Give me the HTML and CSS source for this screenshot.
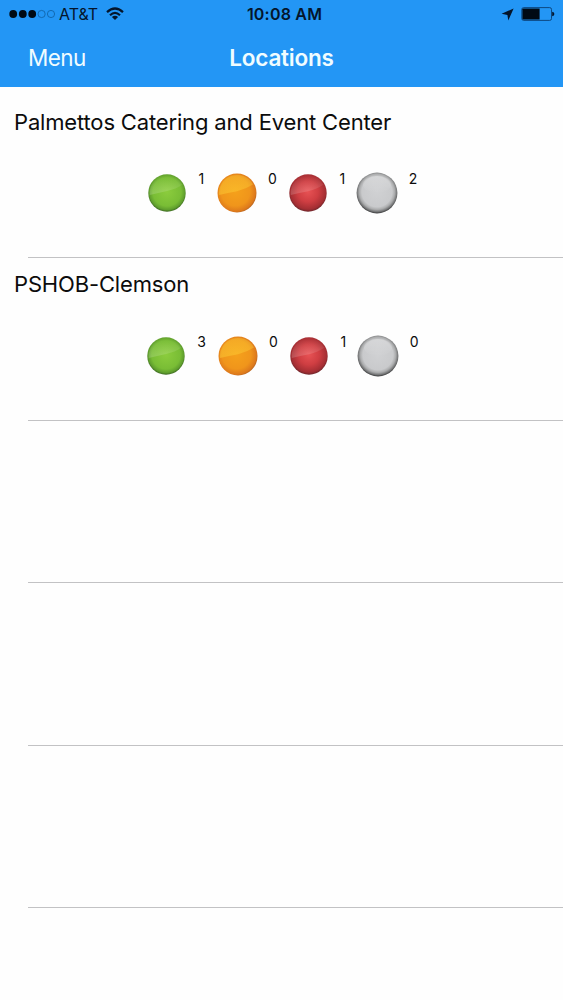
FILE: index.html
```
<!DOCTYPE html>
<html lang="en">
<head>
    <meta charset="UTF-8">
    <title>Locations</title>
    <link rel="stylesheet" href="styles.css">
</head>
<body>
<!-- Shared ball artwork -->
<svg class="defs" width="0" height="0">
    <defs>
        <radialGradient id="green" cx="50%" cy="47%" r="54%">
            <stop offset="0" stop-color="#8bcc3d"/>
            <stop offset="0.7" stop-color="#79bd35"/>
            <stop offset="0.88" stop-color="#609f2d"/>
            <stop offset="1" stop-color="#365f20"/>
        </radialGradient>
        <radialGradient id="orange" cx="46%" cy="46%" r="57%">
            <stop offset="0" stop-color="#f5a11b"/>
            <stop offset="0.65" stop-color="#f0951b"/>
            <stop offset="0.9" stop-color="#dd791c"/>
            <stop offset="1" stop-color="#a95e22"/>
        </radialGradient>
        <radialGradient id="red" cx="50%" cy="46%" r="55%">
            <stop offset="0" stop-color="#e75254"/>
            <stop offset="0.5" stop-color="#cf3e42"/>
            <stop offset="0.86" stop-color="#a42e33"/>
            <stop offset="1" stop-color="#66252a"/>
        </radialGradient>
        <radialGradient id="gray" cx="50%" cy="47%" r="53%">
            <stop offset="0" stop-color="#d0d1d3"/>
            <stop offset="0.7" stop-color="#c9cacc"/>
            <stop offset="0.82" stop-color="#abacad"/>
            <stop offset="0.92" stop-color="#767778"/>
            <stop offset="1" stop-color="#353637"/>
        </radialGradient>
        <linearGradient id="gloss" x1="0" y1="0" x2="0" y2="1">
            <stop offset="0" stop-color="#fff" stop-opacity="0"/>
            <stop offset="1" stop-color="#fff" stop-opacity="0.17"/>
        </linearGradient>
        <linearGradient id="gloss-yellow" x1="0" y1="0" x2="0" y2="1">
            <stop offset="0" stop-color="#ffd83c" stop-opacity="0.3"/>
            <stop offset="1" stop-color="#ffd83c" stop-opacity="0.4"/>
        </linearGradient>
        <linearGradient id="shine" x1="0" y1="0" x2="0" y2="1">
            <stop offset="0" stop-color="#fff" stop-opacity="0.25"/>
            <stop offset="1" stop-color="#fff" stop-opacity="0"/>
        </linearGradient>
        <symbol id="ball-green" viewBox="0 0 42 42">
            <circle cx="21" cy="21" r="18.7" fill="url(#green)"/>
            <path d="M3.8 22.9 A17.3 17.3 0 0 1 36.2 12.8 Q30 17 21 19.1 Q12 21 3.8 22.9Z" fill="url(#gloss)"/>
        </symbol>
        <symbol id="ball-orange" viewBox="0 0 42 42">
            <circle cx="21" cy="21" r="19.5" fill="url(#orange)"/>
            <path d="M3 23.1 A18.1 18.1 0 0 1 37 12.6 Q30 17 21 19.3 Q12 21.1 3 23.1Z" fill="url(#gloss-yellow)"/>
        </symbol>
        <symbol id="ball-red" viewBox="0 0 42 42">
            <circle cx="21" cy="21" r="18.7" fill="url(#red)"/>
            <path d="M3.8 22.9 A17.3 17.3 0 0 1 36.2 12.8 Q30 17 21 19.3 Q12 21.2 3.8 22.9Z" fill="url(#gloss)"/>
        </symbol>
        <symbol id="ball-gray" viewBox="0 0 42 42">
            <circle cx="21" cy="21" r="20.4" fill="url(#gray)"/>
            <ellipse cx="21" cy="12.5" rx="14" ry="8.5" fill="url(#shine)"/>
        </symbol>
    </defs>
</svg>

<!-- Header -->
<div class="header">
    <div class="status-bar">
        <div class="carrier">
            <svg class="signal" width="48" height="10" viewBox="0 0 48 10">
                <circle cx="4.2" cy="5" r="3.9"/>
                <circle cx="13.8" cy="5" r="3.9"/>
                <circle cx="23.2" cy="5" r="3.9"/>
                <circle class="empty" cx="32.6" cy="5" r="3.6"/>
                <circle class="empty" cx="42" cy="5" r="3.6"/>
            </svg>
            <span class="carrier-name">AT&amp;T</span>
            <svg class="wifi" width="18" height="14" viewBox="0 0 18 14">
                <path d="M1 5.1 Q9 -2.1 17 5.1" fill="none" stroke="#04152b" stroke-width="2.2"/>
                <path d="M4 8.2 Q9 3.7 14 8.2" fill="none" stroke="#04152b" stroke-width="2.2"/>
                <path d="M5.9 10 Q9 7.4 12.1 10 L9 13.1Z" fill="#04152b"/>
            </svg>
        </div>
        <div class="clock">10:08 AM</div>
        <div class="indicators">
            <svg width="13" height="13" viewBox="0 0 13 13">
                <path d="M12.6 0.5 L0.6 5.8 L6.4 6.9 L7.3 12.4Z" fill="#04152b"/>
            </svg>
            <svg class="battery" width="34" height="14" viewBox="0 0 34 14">
                <rect x="0.8" y="0.6" width="29.7" height="12.8" rx="1.8" fill="none" stroke="#0a3f74" stroke-width="0.9"/>
                <path d="M2.2 1.5 H18.6 V12.5 H2.2 Q1.4 12.5 1.4 11.7 V2.3 Q1.4 1.5 2.2 1.5Z" fill="#000a14"/>
                <path d="M31.2 4.8 Q33.4 5 33.4 7 Q33.4 9 31.2 9.2Z" fill="#04152b"/>
            </svg>
        </div>
    </div>
    <div class="nav-bar">
        <a class="menu">Menu</a>
        <h1 class="title">Locations</h1>
    </div>
</div>

<!-- Location list -->
<ul class="locations">
    <li class="location">
        <h2>Palmettos Catering and Event Center</h2>
        <div class="counts">
            <div class="count green"><svg><use href="#ball-green"/></svg><span>1</span></div>
            <div class="count orange"><svg><use href="#ball-orange"/></svg><span>0</span></div>
            <div class="count red"><svg><use href="#ball-red"/></svg><span>1</span></div>
            <div class="count gray"><svg><use href="#ball-gray"/></svg><span>2</span></div>
        </div>
    </li>
    <li class="location">
        <h2>PSHOB-Clemson</h2>
        <div class="counts wide">
            <div class="count green"><svg><use href="#ball-green"/></svg><span>3</span></div>
            <div class="count orange"><svg><use href="#ball-orange"/></svg><span>0</span></div>
            <div class="count red"><svg><use href="#ball-red"/></svg><span>1</span></div>
            <div class="count gray"><svg><use href="#ball-gray"/></svg><span>0</span></div>
        </div>
    </li>
    <li class="location"></li>
    <li class="location"></li>
    <li class="location"></li>
</ul>
</body>
</html>
```

FILE: styles.css
```
* {
    box-sizing: border-box;
}
body {
    margin: 0;
    height: 1000px;
    overflow: hidden;
    background-color: #fefefe;
    color: #0c0c0c;
    font-family: Inter, "Liberation Sans", sans-serif;
}
.defs {
    display: block;
}

/* Header */
.header {
    height: 87px;
    background-color: #2396f5;
}
.status-bar {
    display: grid;
    grid-template-columns: 1fr auto 1fr;
    align-items: center;
    height: 28px;
    padding: 0 8px 0 9px;
    color: #04152b;
    font-size: 16px;
}
.carrier {
    display: flex;
    align-items: center;
}
.signal {
    fill: #000a14;
}
.signal .empty {
    fill: none;
    stroke: #0c5795;
    stroke-width: 0.7;
}
.carrier-name {
    margin-left: 2px;
    width: 39px;
    white-space: nowrap;
}
.wifi {
    margin-left: 8px;
}
.clock {
    padding-left: 5px;
    font-weight: 600;
    letter-spacing: 0.2px;
}
.indicators {
    display: flex;
    align-items: center;
    justify-content: flex-end;
}
.battery {
    margin-left: 7px;
}
.nav-bar {
    display: grid;
    grid-template-columns: 1fr auto 1fr;
    align-items: center;
    height: 59px;
    padding: 0 28px;
    color: #f0fcff;
    font-size: 22.5px;
}
.menu {
    letter-spacing: -0.6px;
}
.title {
    margin: 0;
    font-size: 22.5px;
    font-weight: 600;
    letter-spacing: -0.2px;
}

/* Location list */
.locations {
    margin: 0;
    padding: 9px 0 0;
    list-style: none;
}
.location {
    height: 162.4px;
    padding: 11.8px 0 0 14px;
    background: linear-gradient(#c2c2c4, #c2c2c4) 28px 100% / 100% 1px no-repeat;
}
.location h2 {
    margin: 0;
    font-size: 22px;
    font-weight: 400;
    line-height: 28px;
    letter-spacing: -0.16px;
    white-space: nowrap;
}

/* Coloured balls with their numbers */
.counts {
    display: flex;
    margin: 36.6px 0 0 132.2px;
}
.counts.wide {
    margin-left: 130.8px;
}
.count {
    display: flex;
    flex: none;
}
.count svg {
    width: 42px;
    height: 42px;
}
.count span {
    margin-left: 10.4px;
    font-size: 14px;
    line-height: 14px;
}
.count.green {
    width: 69.5px;
}
.wide .count.green {
    width: 71.9px;
}
.count.orange {
    width: 71.3px;
}
.count.red {
    width: 69.3px;
}
```
